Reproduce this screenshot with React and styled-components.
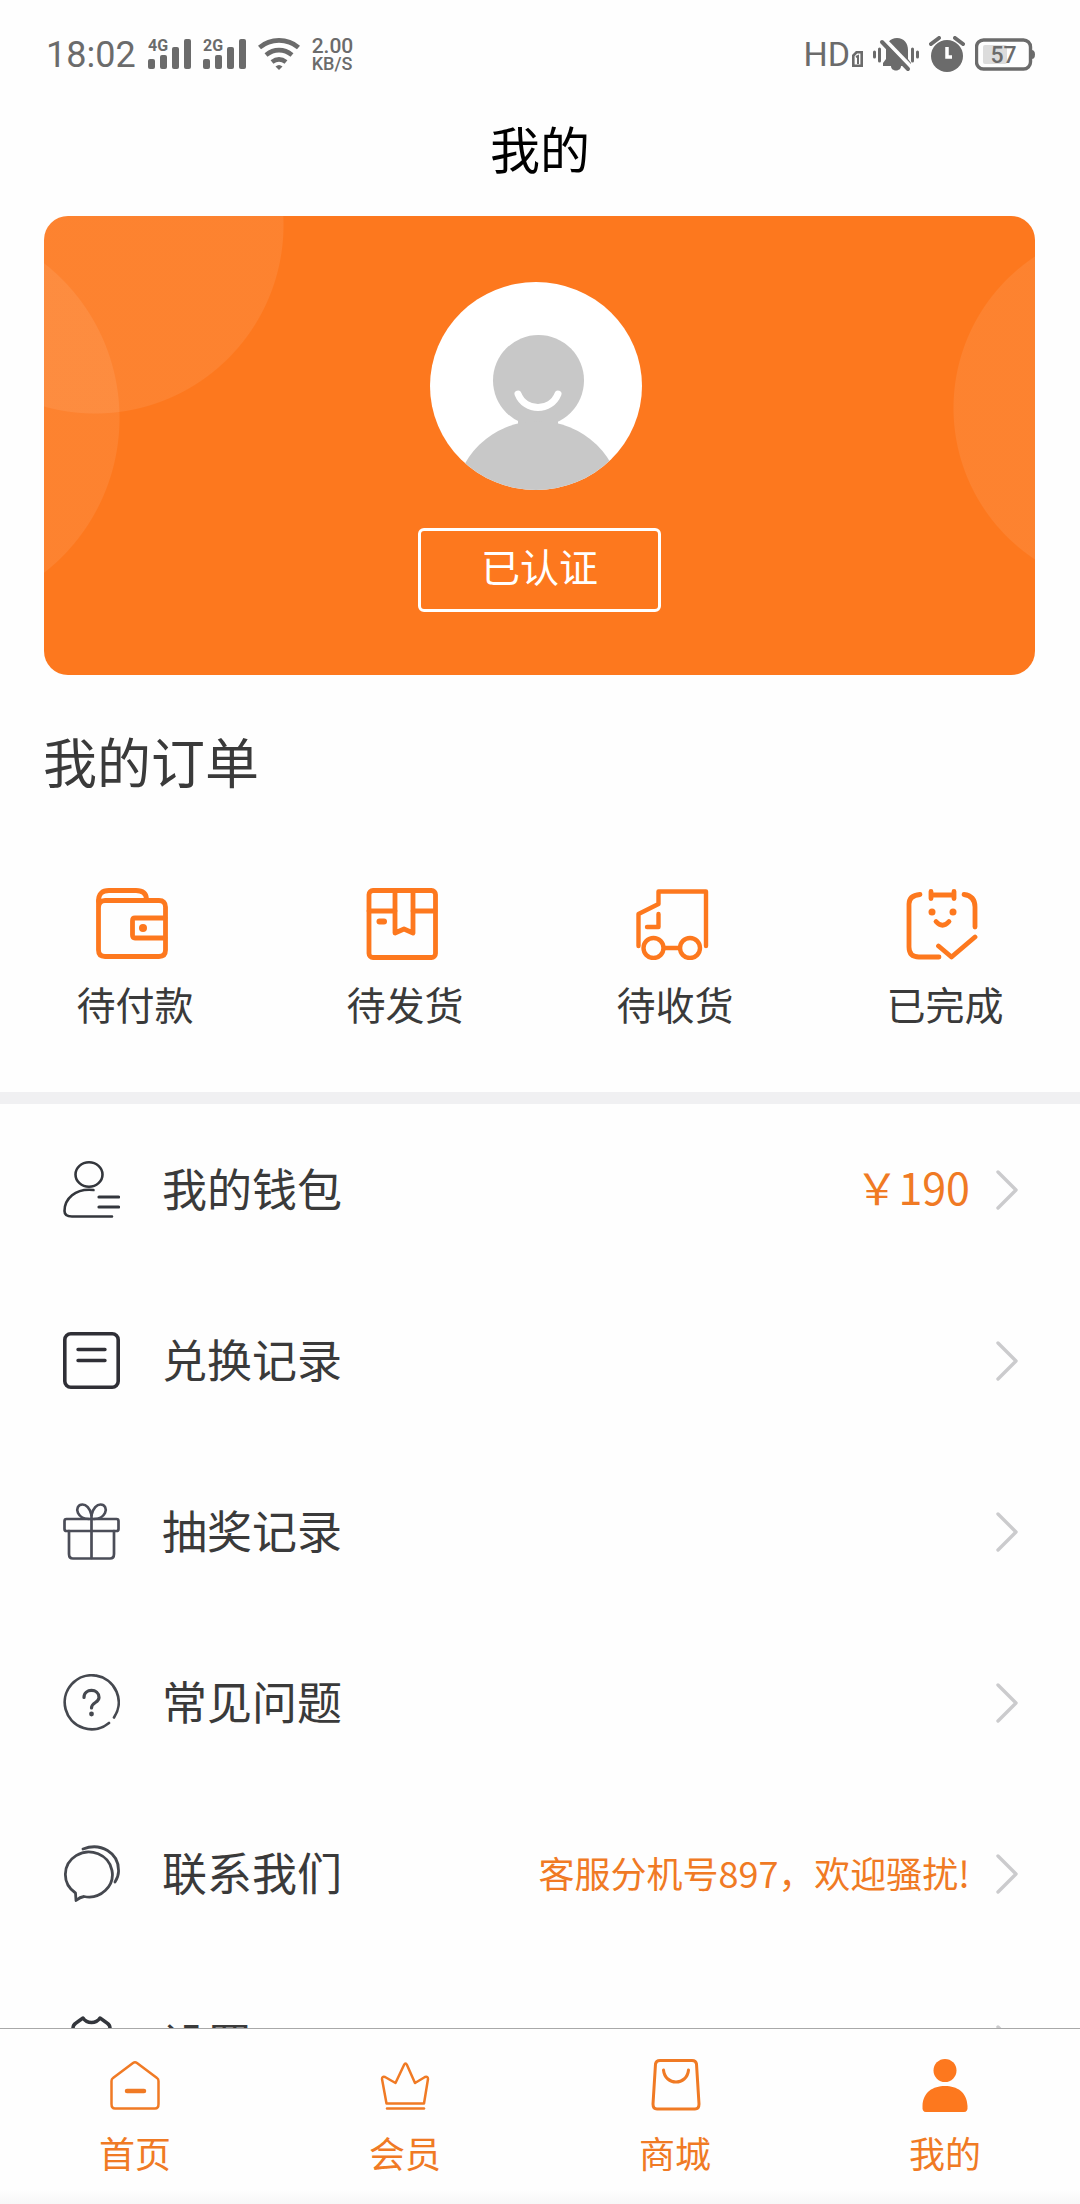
import React from "react";
import styled, { createGlobalStyle } from "styled-components";

const ORANGE = "#fd781e";
const ORANGE_TEXT = "#f07a24";
const INK = "#3a3a3a";
const STATUS = "#6b6b6b";

const GlobalStyle = createGlobalStyle`
  * { box-sizing: border-box; }
  body {
    margin: 0;
    background: #fefefe;
    font-family: "Noto Sans CJK SC", "Noto Sans", sans-serif;
    color: ${INK};
  }
  a { color: inherit; text-decoration: none; }
  svg { display: block; flex: none; }
`;

const Screen = styled.div`
  height: 100vh;
  display: flex;
  flex-direction: column;
  overflow: hidden;
`;

const Scroll = styled.main`
  flex: 1;
  min-height: 0;
  overflow-y: auto;
  scrollbar-width: none;
`;

const StatusBar = styled.div`
  display: flex;
  align-items: center;
  justify-content: space-between;
  height: 92px;
  padding: 16px 45px 0 46px;
  font-family: Roboto, "Liberation Sans", sans-serif;
  color: ${STATUS};
`;

const StatusGroup = styled.div`
  display: flex;
  align-items: center;
  gap: ${(p) => p.$gap}px;
`;

const Clock = styled.span`
  font-size: 36px;
  line-height: 40px;
  padding-top: 2px;
`;

const Speed = styled.span`
  display: flex;
  flex-direction: column;
  font-size: 18px;
  font-weight: 500;
  line-height: 16px;
`;

const SpeedValue = styled.span`
  font-size: 21px;
  line-height: 19px;
`;

const NetLabel = styled.span`
  font-size: 34px;
  line-height: 40px;
`;

const TitleBar = styled.header`
  display: flex;
  align-items: center;
  justify-content: center;
  height: 108px;
  padding-top: 2px;
  margin-bottom: 16px;
`;

const PageTitle = styled.h1`
  margin: 0;
  font-size: 50px;
  font-weight: 400;
  line-height: 60px;
  color: #000;
`;

const ProfileCard = styled.section`
  display: flex;
  flex-direction: column;
  align-items: center;
  gap: 38px;
  margin: 0 45px 0 44px;
  padding: 66px 0 63px;
  border-radius: 24px;
  background:
    radial-gradient(circle 189px at 51px 9px, rgba(255, 255, 255, 0.08) 188px, transparent 189px),
    radial-gradient(circle 197px at -121px 202px, rgba(255, 255, 255, 0.08) 196px, transparent 197px),
    radial-gradient(circle 182px at calc(100% + 100px) 192px, rgba(255, 255, 255, 0.08) 181px, transparent 182px),
    ${ORANGE};
`;

const VerifiedButton = styled.button`
  padding: 8px 60px 18px;
  border: 3px solid #fff;
  border-radius: 6px;
  background: transparent;
  font-family: inherit;
  font-size: 39px;
  line-height: 52px;
  color: #fff;
`;

const Orders = styled.section`
  padding: 56px 0 62px;
  border-bottom: 12px solid #f0f0f2;
`;

const SectionTitle = styled.h2`
  margin: 0 43px 97px;
  font-size: 54px;
  font-weight: 400;
  line-height: 60px;
`;

const OrderGrid = styled.div`
  display: grid;
  grid-template-columns: repeat(4, 1fr);
`;

const OrderLink = styled.a`
  display: flex;
  flex-direction: column;
  align-items: center;
  gap: 17px;
  padding-bottom: 1px;
  font-size: 39px;
  line-height: 52px;
`;

const MenuRow = styled.a`
  display: flex;
  align-items: center;
  height: 171px;
  padding: 0 61px 0 63px;
`;

const MenuLabel = styled.span`
  margin-left: 42px;
  font-size: 45px;
  line-height: 52px;
  padding-bottom: 4px;
`;

const MenuNote = styled.span`
  margin-left: auto;
  margin-right: 26px;
  padding-bottom: ${(p) => (p.$large ? 8 : 4)}px;
  font-size: ${(p) => (p.$large ? 43 : 36)}px;
  line-height: 52px;
  color: ${ORANGE_TEXT};
`;

const TabBar = styled.nav`
  display: grid;
  grid-template-columns: repeat(4, 1fr);
  height: 176px;
  padding-top: 29px;
  border-top: 1px solid #a8a8a8;
  background: linear-gradient(#fefefe 160px, #f6f6f6 176px);
`;

const Tab = styled.a`
  display: flex;
  flex-direction: column;
  align-items: center;
  gap: 14px;
  font-size: 36px;
  line-height: 52px;
  color: ${ORANGE_TEXT};
`;

const Drawing = ({ w, h, stroke = "none", sw = 0, children }) => (
  <svg
    width={w}
    height={h}
    viewBox={`0 0 ${w} ${h}`}
    fill="none"
    stroke={stroke}
    strokeWidth={sw}
    strokeLinecap="round"
    strokeLinejoin="round"
    aria-hidden="true"
  >
    {children}
  </svg>
);

const Signal = ({ label }) => (
  <svg width="43" height="42" viewBox="0 -5 43 42" fill={STATUS} aria-hidden="true">
    <text x="0" y="13" fontSize="16" fontWeight="700" fontFamily="Roboto">{label}</text>
    <rect x="0" y="21" width="7" height="10" rx="2" />
    <rect x="12" y="17" width="7" height="14" rx="2" />
    <rect x="24" y="9" width="7" height="22" rx="2" />
    <rect x="36" y="1" width="7" height="30" rx="2" />
  </svg>
);

const Wifi = () => (
  <svg width="42" height="34" viewBox="0 0 42 34" fill="none" stroke={STATUS} strokeWidth="4.6" aria-hidden="true">
    <path d="M1.5 10.5C12.5 1 29.5 1 40.5 10.5" />
    <path d="M8 18C16 11.5 26 11.5 34 18" />
    <path d="M14 25C18.5 21.5 23.5 21.5 28 25" />
    <path d="M17.5 29.5Q21 26.5 24.5 29.5L21 33Z" fill={STATUS} stroke="none" />
  </svg>
);

const SimMark = () => (
  <svg width="11" height="26" viewBox="0 0 11 26" fill="none" stroke={STATUS} strokeWidth="2.6" aria-hidden="true">
    <path d="M4.5 11.3H9.7V24.7H1.3V14.5Z" />
    <path d="M4 16L6 15V23" strokeWidth="2" />
  </svg>
);

const BellOff = () => (
  <svg width="46" height="36" viewBox="0 0 46 36" aria-hidden="true">
    <path
      d="M10 30V27L13 23V14C13 7 17 2 24 2C31 2 35 7 35 14V23L38 27V30H28C28 36 18 36 18 30Z"
      fill={STATUS}
    />
    <path d="M12 4L38 31" stroke="#fefefe" strokeWidth="4" />
    <path d="M9 6L35 33" stroke={STATUS} strokeWidth="4" strokeLinecap="round" />
    <path d="M1.5 16V21M6.5 13V25M39.5 13V25M44.5 16V21" stroke={STATUS} strokeWidth="3" strokeLinecap="round" />
  </svg>
);

const Alarm = () => (
  <svg width="36" height="36" viewBox="0 0 36 36" fill="none" aria-hidden="true">
    <circle cx="18" cy="20" r="16" fill={STATUS} />
    <path d="M18 11V21H23" stroke="#fff" strokeWidth="3.5" />
    <path d="M2 8L10 2M34 8L26 2" stroke={STATUS} strokeWidth="4" strokeLinecap="round" />
  </svg>
);

const Battery = () => (
  <svg width="60" height="33" viewBox="0 0 60 33" fill="none" aria-label="57%">
    <rect x="1.5" y="2" width="54" height="29" rx="7" stroke={STATUS} strokeWidth="3.4" />
    <rect x="8" y="7" width="24" height="19" rx="2" fill="#dcdcdc" />
    <path d="M56.5 12Q60 12 60 16.5Q60 21 56.5 21Z" fill={STATUS} />
    <text x="28.5" y="25" textAnchor="middle" fontSize="23" fontWeight="500" fontFamily="Roboto" fill={STATUS}>57</text>
  </svg>
);

const Avatar = () => (
  <svg width="220" height="208" viewBox="0 0 220 208" role="img" aria-label="头像">
    <defs>
      <clipPath id="avatar-clip"><ellipse cx="106" cy="104" rx="106" ry="104" /></clipPath>
    </defs>
    <g clipPath="url(#avatar-clip)">
      <rect width="220" height="208" fill="#fff" />
      <circle cx="108.500" cy="98.500" r="45.500" fill="#c8c8c8" />
      <path d="M88 130H128V150H88Z" fill="#c8c8c8" />
      <ellipse cx="108" cy="220" rx="83" ry="81" fill="#c8c8c8" />
      <path d="M88 112C95 130 121 130 128 112" fill="none" stroke="#fff" strokeWidth="7" strokeLinecap="round" />
    </g>
  </svg>
);

const WalletIcon = () => (
  <Drawing w={78} h={72} stroke={ORANGE} sw={4.8}>
    <path d="M2.5 13Q2.5 2.5 13 2.5H40Q50 2.5 50.5 11" />
    <path d="M2.5 13V62Q2.5 68.5 9 68.5H63Q69.5 68.5 69.5 62V19Q69.5 12.5 63 12.5H9Q2.5 12.5 2.5 20" />
    <path d="M69 30H39Q36.5 30 36.5 33V47Q36.5 50 39 50H69" />
    <circle cx="47" cy="40" r="4" fill={ORANGE} stroke="none" />
  </Drawing>
);

const BoxIcon = () => (
  <Drawing w={78} h={72} stroke={ORANGE} sw={4.8}>
    <rect x="3" y="2.5" width="66.5" height="67" rx="4" />
    <path d="M3 23H29M47 23H69" />
    <path d="M29 3V45L38 41L47 45V3" />
    <path d="M13.5 33.5H18" strokeWidth="6" />
  </Drawing>
);

const TruckIcon = () => (
  <Drawing w={78} h={72} stroke={ORANGE} sw={4.4}>
    <path d="M2.5 58V26L22.5 16V3.500H70V58" />
    <path d="M22.5 26V39H11" />
    <circle cx="17.5" cy="60" r="10" />
    <circle cx="54" cy="60" r="10" />
    <path d="M28 60H44" />
  </Drawing>
);

const DoneIcon = () => (
  <Drawing w={78} h={72} stroke={ORANGE} sw={4.8}>
    <path d="M14 6.5Q3 7.5 3 16V59Q3 69 13 69H33" />
    <path d="M58 6.5Q69 8 69 19V39" />
    <path d="M25 3.5V10.500M48 3.5V10.5M25 7H48" />
    <path d="M30 33.5Q36.5 41 43 33.5" />
    <path d="M32.5 58L45.5 69L69 49" />
    <circle cx="26" cy="24" r="3.5" fill={ORANGE} stroke="none" />
    <circle cx="47" cy="24" r="3.5" fill={ORANGE} stroke="none" />
  </Drawing>
);

const PersonLinesIcon = () => (
  <Drawing w={57} h={57} stroke="#33363c" sw={2.6}>
    <ellipse cx="26" cy="13.5" rx="13.5" ry="12.2" />
    <path d="M30.5 29C12 27 1.5 38 1.5 50Q1.5 55.5 9 55.5H49" />
    <path d="M36 36H55.500M36 46H55.5" strokeWidth="3.2" />
  </Drawing>
);

const FormIcon = () => (
  <Drawing w={57} h={57} stroke="#2f2f36" sw={3.6}>
    <rect x="1.8" y="1.8" width="53.4" height="53.4" rx="6" />
    <path d="M15 17.5H42M15 28.5H42" strokeWidth="3.4" />
  </Drawing>
);

const GiftIcon = () => (
  <Drawing w={57} h={57} stroke="#4b4d58" sw={2.7}>
    <rect x="1.5" y="16" width="54" height="12" rx="2" />
    <path d="M6 28V51Q6 55.5 10 55.5H47Q51 55.5 51 51V28" />
    <path d="M28.5 10V55" />
    <path d="M28.5 12C27 5 23 1.5 19.5 1.5C15 1.5 13 6 15 10C17 14 21 16 26 16" />
    <path d="M28.5 12C30 5 34 1.5 37.5 1.5C42 1.5 44 6 42 10C40 14 36 16 31 16" />
  </Drawing>
);

const QuestionIcon = () => (
  <Drawing w={57} h={57} stroke="#45484f" sw={2.7}>
    <path d="M46 49A27 27 0 1 1 51 43.5" />
    <path d="M21 23.5C21 14 36 14 36 23.5C36 29 28.5 28 28.5 34" strokeWidth="3.2" />
    <circle cx="28.500" cy="40" r="2.400" fill="#45484f" stroke="none" />
  </Drawing>
);

const ChatIcon = () => (
  <Drawing w={57} h={57} stroke="#45484f" sw={2.8}>
    <path d="M12.5 48A23.500 22.500 0 1 1 21 51.500Q17 52 13 55.500Z" />
    <path d="M20 4C38 -3 55.500 8 55.5 25Q56 31 52 37" />
  </Drawing>
);

const SettingsIcon = () => (
  <Drawing w={57} h={57} stroke="#33363c" sw={3.4}>
    <path d="M10 12Q10 9 13 7L20 2C24 8 33 8 37 2L44 7Q47 9 47 12L55 28L47 45Q47 48 44 50L37 55C33 49 24 49 20 55L13 50Q10 48 10 45L2 28Z" />
    <circle cx="28.5" cy="28.5" r="8" />
  </Drawing>
);

const Chevron = () => (
  <Drawing w={23} h={40} stroke="#cbcbcd" sw={3.4}>
    <path d="M2 2L20 20L2 38" />
  </Drawing>
);

const HomeIcon = () => (
  <Drawing w={54} h={54} stroke={ORANGE_TEXT} sw={2.5}>
    <path d="M25 5Q27 3.5 29 5L49 20Q50.5 21 50.5 23V46Q50.5 50.5 47 50.5H7Q3.5 50.5 3.5 46V23Q3.5 21 5 20Z" />
    <path d="M19 33H36" strokeWidth="4.5" />
  </Drawing>
);

const CrownIcon = () => (
  <Drawing w={54} h={54} stroke={ORANGE_TEXT} sw={2.5}>
    <path d="M8.5 45.5L4 21Q4 18 7 19L17.5 25L26 7Q27.5 4 29 7L37 25L47 19Q50 18 50 21L46 45.5Z" />
    <path d="M9 50.5H46" />
  </Drawing>
);

const BagIcon = () => (
  <Drawing w={54} h={54} stroke={ORANGE_TEXT} sw={3}>
    <path d="M12 2.5H44Q48 2.5 48.5 6L51 46Q51 51 47 51H9Q5 51 5 46L7.5 6Q8 2.5 12 2.5Z" />
    <path d="M15.5 12C17 28 39 28 40.5 12" />
  </Drawing>
);

const MeIcon = () => (
  <Drawing w={54} h={54}>
    <circle cx="27" cy="12.5" r="11.5" fill={ORANGE} />
    <path d="M8 54Q4 54 4.500 48C5 34 15 28 27 28C39 28 49 34 49.5 48Q50 54 46 54Z" fill={ORANGE} />
  </Drawing>
);

const orders = [
  { label: "待付款", Icon: WalletIcon },
  { label: "待发货", Icon: BoxIcon },
  { label: "待收货", Icon: TruckIcon },
  { label: "已完成", Icon: DoneIcon },
];

const menu = [
  { label: "我的钱包", Icon: PersonLinesIcon, note: "￥190", large: true },
  { label: "兑换记录", Icon: FormIcon },
  { label: "抽奖记录", Icon: GiftIcon },
  { label: "常见问题", Icon: QuestionIcon },
  { label: "联系我们", Icon: ChatIcon, note: "客服分机号897，欢迎骚扰!" },
  { label: "设置", Icon: SettingsIcon },
];

const tabs = [
  { label: "首页", Icon: HomeIcon },
  { label: "会员", Icon: CrownIcon },
  { label: "商城", Icon: BagIcon },
  { label: "我的", Icon: MeIcon, current: true },
];

export default function App() {
  return (
    <Screen>
      <GlobalStyle />
      <StatusBar>
        <StatusGroup $gap={12}>
          <Clock>18:02</Clock>
          <Signal label="4G" />
          <Signal label="2G" />
          <Wifi />
          <Speed>
            <SpeedValue>2.00</SpeedValue>
            <span>KB/S</span>
          </Speed>
        </StatusGroup>
        <StatusGroup $gap={10}>
          <StatusGroup $gap={2}>
            <NetLabel>HD</NetLabel>
            <SimMark />
          </StatusGroup>
          <BellOff />
          <Alarm />
          <Battery />
        </StatusGroup>
      </StatusBar>
      <TitleBar>
        <PageTitle>我的</PageTitle>
      </TitleBar>
      <Scroll>
        <ProfileCard>
          <Avatar />
          <VerifiedButton type="button">已认证</VerifiedButton>
        </ProfileCard>
        <Orders>
          <SectionTitle>我的订单</SectionTitle>
          <OrderGrid>
            {orders.map(({ label, Icon }) => (
              <OrderLink href="#" key={label}>
                <Icon />
                {label}
              </OrderLink>
            ))}
          </OrderGrid>
        </Orders>
        {menu.map(({ label, Icon, note, large }) => (
          <MenuRow href="#" key={label}>
            <Icon />
            <MenuLabel>{label}</MenuLabel>
            <MenuNote $large={large}>{note}</MenuNote>
            <Chevron />
          </MenuRow>
        ))}
      </Scroll>
      <TabBar>
        {tabs.map(({ label, Icon, current }) => (
          <Tab href="#" key={label} aria-current={current ? "page" : undefined}>
            <Icon />
            {label}
          </Tab>
        ))}
      </TabBar>
    </Screen>
  );
}
